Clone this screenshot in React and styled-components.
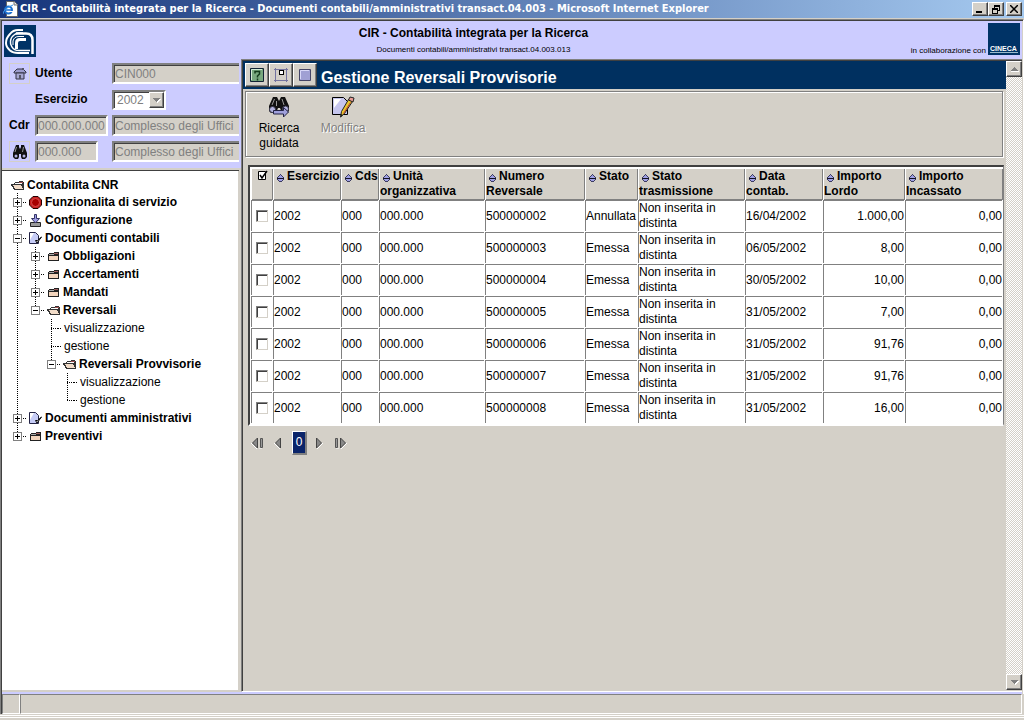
import React from 'react';
import styled, { createGlobalStyle, css } from 'styled-components';

const face = '#d4d0c8';
const shade = '#808080';
const dark = '#404040';
const lilac = '#ccccff';
const navy = '#003060';

const Global = createGlobalStyle`
  * { box-sizing: border-box; }
  body { margin: 0; background: ${face}; font: 12px/15px "Liberation Sans", Arial, sans-serif; color: #000; }
  button, input, select { font: inherit; color: inherit; margin: 0; padding: 0; border-radius: 0; }
  svg { display: block; flex: none; }
`;

const raised = css`
  background: ${face};
  border: 1px solid;
  border-color: #fff ${dark} ${dark} #fff;
  box-shadow: inset -1px -1px 0 ${shade};
`;
const sunken = css`
  border: 2px solid;
  border-color: ${shade} #fff #fff ${shade};
  box-shadow: inset 1px 1px 0 ${dark};
`;

const Window = styled.div`
  min-height: 100vh;
  display: flex;
  flex-direction: column;
  background: ${face};
`;
const TitleBar = styled.header`
  height: 18px;
  display: flex;
  align-items: center;
  padding: 0 2px 0 3px;
  background: linear-gradient(90deg, #16347a, #a6caf0);
  color: #fff;
`;
const WindowTitle = styled.span`
  flex: 1;
  margin-left: 2px;
  font: bold 11px/16px "DejaVu Sans Condensed", "Noto Sans", sans-serif;
  white-space: nowrap;
  overflow: hidden;
`;
const WindowButton = styled.button`
  ${raised}
  width: 16px;
  height: 14px;
  display: grid;
  place-items: center;
  margin-left: ${(p) => (p.$apart ? '2px' : '0')};
`;
const Client = styled.div`
  flex: 1;
  display: flex;
  flex-direction: column;
  margin-top: 1px;
  background: ${lilac};
  border-style: solid;
  border-width: 1px 1px 0 1px;
  border-color: ${shade} #fff #fff ${shade};
  box-shadow: inset 1px 1px 0 ${dark}, inset -1px 0 0 ${face};
  padding: 1px 1px 2px 1px;
`;
const Banner = styled.div`
  height: 38px;
  display: flex;
  justify-content: space-between;
  padding: 2px 2px 0;
`;
const BannerLogo = styled.div`
  margin-top: ${(p) => (p.$low ? '2px' : '0')};
  width: 32px;
  height: 32px;
  background: #003366;
`;
const BannerText = styled.div`
  text-align: center;
`;
const BannerTitle = styled.h1`
  margin: 2px 0 0;
  font-size: 12px;
  line-height: 16px;
`;
const Small = styled.div`
  font-size: 8px;
  line-height: 17px;
`;
const Partner = styled.div`
  display: flex;
  gap: 2px;
  align-items: flex-end;
  height: 32px;
  & > ${Small} { line-height: 8px; }
`;

const Columns = styled.div`
  flex: 1;
  display: flex;
`;
const Sidebar = styled.aside`
  width: 239px;
  flex: none;
  display: flex;
  flex-direction: column;
`;
const Form = styled.form`
  display: grid;
  gap: 5px;
  padding: 4px 0 6px 7px;
  width: 237px;
  overflow: hidden;
`;
const FormRow = styled.div`
  display: grid;
  grid-template-columns: 26px 77px 1fr;
  height: 21px;
  align-items: center;
`;
const Label = styled.label`
  font-weight: bold;
  grid-column: ${(p) => (p.$second ? 2 : 'auto')};
`;
const Field = styled.input`
  ${sunken}
  width: ${(p) => p.$width};
  height: 21px;
  padding-left: 1px;
  background: ${face};
  color: ${shade};
`;
const SelectBox = styled.div`
  ${sunken}
  width: 54px;
  height: 20px;
  display: flex;
  background: #fff;
`;
const Year = styled.select`
  appearance: none;
  flex: 1;
  min-width: 0;
  border: 0;
  background: transparent;
  padding: 1px 0 0 3px;
  color: ${shade};
  opacity: 1;
`;
const SelectArrow = styled.span`
  ${raised}
  width: 15px;
  display: grid;
  place-items: center;
`;
const IconButton = styled.button`
  width: 21px;
  height: 21px;
  display: grid;
  place-items: center;
  background: transparent;
  border: 1px solid ${face};
`;
const TreeFrame = styled.nav`
  flex: 1;
  background: #fff;
  border-top: 2px solid ${face};
  box-shadow: inset 0 1px 0 ${dark}, inset -1px 0 0 ${face};
  border-right: 2px solid ${face};
  border-bottom: 2px solid ${face};
  padding: 8px 0 6px 6px;
`;

const TreeRow = styled.div`
  height: ${(p) => (p.$root ? '15px' : '18px')};
  display: flex;
  align-items: center;
  white-space: nowrap;
`;
const vertical = 'repeating-linear-gradient(#000 0 1px, transparent 1px 2px) 9px 0 /';
const horizontal = 'repeating-linear-gradient(90deg, #000 0 1px, transparent 1px 2px) 9px 9px / 9px 1px no-repeat';
const Guide = styled.span`
  width: ${(p) => (p.$narrow ? '16px' : '18px')};
  height: 18px;
  flex: none;
  display: grid;
  align-items: center;
  padding-left: 5px;
  background: ${(p) =>
    ({
      line: `${vertical} 1px 18px no-repeat`,
      tee: `${horizontal}, ${vertical} 1px 18px no-repeat`,
      end: `${horizontal}, ${vertical} 1px 9px no-repeat`,
      none: 'none',
    })[p.$kind]};
`;
const Toggle = styled.button`
  width: 9px;
  height: 9px;
  border: 1px solid ${shade};
  background: #fff;
  display: grid;
  place-items: center;
`;
const TreeIcon = styled.span`
  width: 19px;
  flex: none;
  display: grid;
  justify-content: center;
`;
const Dots = styled.span`
  width: 4px;
  height: 1px;
  background: repeating-linear-gradient(90deg, #000 0 1px, transparent 1px 2px);
`;
const TreeLink = styled.a`
  color: #000;
  text-decoration: none;
  font-weight: ${(p) => (p.$leaf ? 'normal' : 'bold')};
  padding-left: ${(p) => (p.$leaf ? '2px' : '0')};
`;

const Main = styled.main`
  flex: 1;
  min-width: 0;
  display: flex;
  background: ${face};
  border-style: solid;
  border-width: 1px 0 1px 1px;
  border-color: ${shade} #fff #fff ${shade};
  box-shadow: inset 1px 1px 0 ${dark};
  padding: 1px 0 1px 1px;
`;
const Content = styled.div`
  flex: 1;
  min-width: 0;
`;
const SectionBar = styled.div`
  height: 28px;
  display: flex;
  align-items: center;
  padding-left: 2px;
  background: ${navy};
  color: #fff;
`;
const BarButton = styled.button`
  ${raised}
  width: 24px;
  height: 24px;
  display: grid;
  place-items: center;
`;
const SectionTitle = styled.h2`
  margin: 6px 0 0 4px;
  font-size: 16px;
  line-height: 20px;
`;
const Toolbar = styled.div`
  margin: 2px 3px 0 2px;
  height: 66px;
  border: 1px solid ${shade};
  box-shadow: inset 0 1px 0 #fff, inset 1px 0 0 #fff, 1px 1px 0 #fff;
  display: flex;
  align-items: flex-start;
  gap: 10px;
  padding: 4px 0 0 6px;
`;
const Tool = styled.button`
  width: 54px;
  border: 0;
  background: transparent;
  display: flex;
  flex-direction: column;
  align-items: center;
  gap: 3px;
  line-height: 15px;
  white-space: pre-line;
  color: ${(p) => (p.disabled ? shade : '#000')};
  text-shadow: ${(p) => (p.disabled ? '1px 1px 0 #fff' : 'none')};
`;

const TableFrame = styled.div`
  margin: 8px 2px 0 5px;
  background: #fff;
  border: 2px solid;
  border-color: ${dark} ${shade} #fff ${dark};
  border-right-width: 1px;
`;
const Table = styled.table`
  width: 100%;
  table-layout: fixed;
  border-spacing: 1px;
`;
const Th = styled.th`
  padding: 0;
  height: 31px;
  text-align: ${(p) => (p.$center ? 'center' : 'left')};
  vertical-align: top;
  white-space: pre;
  background: ${face};
  border-style: solid;
  border-color: #fff;
  border-width: 1px 0 0 1px;
  box-shadow: 1px 1px 0 ${shade};
`;
const SortButton = styled.button`
  border: 0;
  background: transparent;
  display: inline-block;
  vertical-align: -3px;
  height: 10px;
  margin: 0 2px;
`;
const Td = styled.td`
  padding: 0;
  height: 31px;
  border-style: solid;
  border-color: ${shade};
  border-width: 1px 0 0 1px;
  text-align: ${(p) => p.$align || 'left'};
`;
const Check = styled.input`
  appearance: none;
  display: block;
  margin: 0 auto;
  width: 12px;
  height: 12px;
  background: #fff;
  border: 1px solid;
  border-color: ${shade} ${face} ${face} ${shade};
  box-shadow: inset 1px 1px 0 ${dark};
`;
const HeadCheck = styled.button`
  width: 11px;
  height: 11px;
  border: 0;
  background: transparent;
  display: block;
  margin: 1px auto;
`;
const Pager = styled.div`
  display: flex;
  align-items: center;
  gap: 9px;
  margin-top: 5px;
  padding-left: 8px;
`;
const PageStep = styled.button`
  width: ${(p) => (p.$wide ? '14px' : '9px')};
  height: 12px;
  border: 0;
  background: transparent;
`;
const PageNumber = styled.button`
  ${raised}
  width: 15px;
  height: 24px;
  background: #0a246a;
  border-width: 1px 2px 2px 1px;
  border-color: #fff ${shade} ${shade} #fff;
  box-shadow: none;
  color: #fff;
`;

const ScrollBar = styled.div`
  width: 16px;
  flex: none;
  display: flex;
  flex-direction: column;
  background: repeating-conic-gradient(#fff 0 25%, ${face} 0 50%) 0 0 / 2px 2px;
`;
const ScrollButton = styled.button`
  ${raised}
  width: 16px;
  height: 16px;
  display: grid;
  place-items: center;
`;
const ScrollTrack = styled.div`
  flex: 1;
`;

const StatusBar = styled.footer`
  height: 20px;
  display: flex;
  background: ${face};
  border-left: 1px solid ${shade};
  box-shadow: inset 1px 0 0 ${dark};
  padding: 0 2px 0 1px;
`;
const StatusPane = styled.div`
  width: ${(p) => (p.$grow ? 'auto' : '18px')};
  flex: ${(p) => (p.$grow ? 1 : 'none')};
  height: 20px;
  border: 1px solid;
  border-color: ${shade} #fff #fff ${shade};
`;
const WindowEdge = styled.div`
  height: 3px;
  margin: 1px 0 2px;
  border: solid #fff;
  border-width: 1px 0;
`;

const BrowserIcon = () => (
  <svg width="15" height="16" viewBox="0 0 15 16">
    <path d="M3.500.5h8l3 3v12h-11z" fill="#fff" stroke="#666" />
    <path d="M11 1v3h3" fill="#ddd" stroke="#777" />
    <circle cx="5.500" cy="9" r="3.500" fill="#fff" stroke="#1c6fd0" strokeWidth="2" />
    <path d="M3 9h6" stroke="#1c6fd0" strokeWidth="1.500" />
    <path d="M7 10h3v1H7z" fill="#fff" />
    <path d="M0 13Q0 8 10 4" fill="none" stroke="#3c96e8" />
  </svg>
);
const CnrLogo = () => (
  <svg width="32" height="32" viewBox="0 0 32 32" fill="none" stroke="#fff">
    <path d="M19 5H14Q9 5 6 9Q2 13 2 18Q2 22 6 25.500Q9 28 14 28H25" strokeWidth="2" />
    <path d="M26 25.500H15Q10 25.500 8 22Q6 19 6.500 16Q7 12 10 10Q12 8 15 8H19" strokeWidth="1.500" />
    <path d="M12 8.500H22Q28.500 8.500 28.500 15V29" strokeWidth="2.500" />
    <path d="M22 14.500H16Q12.500 14.500 12.500 18V24" strokeWidth="3" />
    <path d="M9 20V16Q10 11.500 15 11.500H20" strokeWidth="1" />
  </svg>
);
const CinecaLogo = () => (
  <svg width="32" height="32" viewBox="0 0 32 32">
    <text x="2" y="28" fill="#fff" fontSize="7" fontWeight="bold" fontFamily="Liberation Sans, sans-serif">CINECA</text>
    <path d="M2 29.500h28" stroke="#9bc" />
  </svg>
);
const HomeIcon = () => (
  <svg width="14" height="13" viewBox="0 0 14 13">
    <path d="M1 5L4 2H10L13 5V6H1z" fill="#9c9cce" stroke="#334" />
    <path d="M3 6h8v6H3z" fill="#a6a6d2" stroke="#334" />
    <path d="M6 8h2v4H6zM9 1h2v2H9z" fill="#556" />
  </svg>
);
const SearchIcon = () => (
  <svg width="14" height="14" viewBox="0 0 14 14">
    <path d="M3 0h3v2l1 2 1-2V0h3l3 8v4l-2 2H9l-1-2V9H6v3l-1 2H2l-2-2V8z" fill="#111" />
    <path d="M3.500 2L2 7M10.500 2l-1 5" stroke="#999" />
    <circle cx="3" cy="11" r="1.500" fill="#b4b4e0" />
    <circle cx="11" cy="11" r="1.500" fill="#b4b4e0" />
  </svg>
);
const GuidedSearchIcon = () => (
  <svg width="22" height="22" viewBox="0 0 22 22">
    <path d="M5 1h4l2 4 2-4h4l4 9v5l-2 2h-5l-2-5h-2l-2 5H3l-2-2v-5z" fill="#111" />
    <path d="M6.500 3L4 9M14 3l2 6M8.500 5v5" stroke="#999" />
    <ellipse cx="4.500" cy="13.500" rx="3" ry="3" fill="#b4b4e0" stroke="#334" />
    <ellipse cx="17.500" cy="13" rx="3" ry="3" fill="#b4b4e0" stroke="#334" />
    <path d="M5.500 14.500h10v-3l5 4.500-5 5v-3h-10z" fill="#a0a0dc" stroke="#224" />
  </svg>
);
const EditIcon = () => (
  <svg width="24" height="22" viewBox="0 0 24 22">
    <path d="M1.500 1.500h11l4 4v13h-15z" fill="#c6c6ee" stroke="#000" />
    <path d="M3 3h7L3 12z" fill="#fff" />
    <path d="M17.500 3.500l4 2-8 12-4 3.500 1-5.500z" fill="#e9c62d" stroke="#222" />
    <path d="M19.500 6.500l-7 11" stroke="#c04030" />
    <path d="M10 18l2 1-2.500 2.500z" fill="#222" />
    <path d="M17.500 4l1.500-3 4 1-1 4z" fill="#e89a94" stroke="#222" />
  </svg>
);
const HelpIcon = () => (
  <svg width="14" height="14" viewBox="0 0 14 14">
    <path d="M.5.5h13v13H.5z" fill="#78a87e" stroke="#123" />
    <path d="M1.500 12V1.500H12" fill="none" stroke="#d4ecd6" />
    <path d="M5 5.500V3.500h4.500V6L7.500 8v1.500M7.500 10.500v2" fill="none" stroke="#143c1c" strokeWidth="1.500" />
  </svg>
);
const DockIcon = () => (
  <svg width="14" height="14" viewBox="0 0 14 14" fill="none" shapeRendering="crispEdges">
    <path d="M1.500 0v14M12.500 0v14M0 1.500h14M0 12.500h14" stroke="#7474a0" />
    <path d="M5 2.500h4v4H5z" fill="#fff" stroke="#000" />
  </svg>
);
const PanelIcon = () => (
  <svg width="12" height="12" viewBox="0 0 12 12">
    <path d="M.5.5h11v11H.5z" fill="#a0a0d4" stroke="#446" />
    <path d="M1.500 10V1.500H10" fill="none" stroke="#d8d8f8" />
  </svg>
);
const Folder = ({ open }) =>
  open ? (
    <svg width="13" height="9" viewBox="0 0 13 9" shapeRendering="crispEdges">
      <path d="M4 1h4V0h4v1h1v8H3V8H2V6H1V5H0V3h3V2h1z" fill="#333" />
      <path d="M8 1h4v1H8z" fill="#a05050" />
      <path d="M4 2h7v1H4z" fill="#fff" />
      <path d="M1 4h9v1H2zM3 5h8v1H3zM3 6h8v1H3zM4 7h8v1H4z" fill="#f2dcc8" />
    </svg>
  ) : (
    <svg width="11" height="9" viewBox="0 0 11 9" shapeRendering="crispEdges">
      <path d="M1 1h5V0h5v9H0V2h1z" fill="#222" />
      <path d="M6 1h4v1H6z" fill="#a06060" />
      <path d="M1 2h5v1H1z" fill="#aaa" />
      <path d="M1 4h9v4H1z" fill="#f2d4bc" />
    </svg>
  );
const StopIcon = () => (
  <svg width="13" height="13" viewBox="0 0 13 13">
    <path d="M4 .5h5L12.500 4v5L9 12.500H4L.5 9V4z" fill="#c82020" stroke="#200" />
    <circle cx="6.500" cy="6.500" r="4" fill="#a80000" stroke="#d85050" />
  </svg>
);
const ConfigIcon = () => (
  <svg width="11" height="13" viewBox="0 0 11 13">
    <path d="M.5 8.500h10v4H.5z" fill="#999" stroke="#222" />
    <path d="M4.500.5h2v4h3l-4 4.500-4-4.500h3z" fill="#9c9ce4" stroke="#336" />
  </svg>
);
const DocIcon = () => (
  <svg width="13" height="12" viewBox="0 0 13 12">
    <path d="M.5.5h6l3 3v8h-9z" fill="#c6ccf6" stroke="#224" />
    <path d="M1 1h4L1 8z" fill="#fff" />
    <path d="M6.500 8.500h2l4-3.500-4.500 6z" fill="#fff" stroke="#000" />
  </svg>
);
const treeIcons = {
  open: <Folder open />,
  closed: <Folder />,
  stop: <StopIcon />,
  config: <ConfigIcon />,
  doc: <DocIcon />,
};
const SortIcon = () => (
  <svg width="9" height="10" viewBox="0 0 9 10" shapeRendering="crispEdges">
    <path d="M4 1h1v1h1v1h1v1h1v3H7v1H6v1H3V8H2V7H1V4h1V3h1V2h1z" fill="#3c3c60" />
    <path d="M4 2h1v1h1v1h1v1H2V4h1V3h1zM2 6h5v1H6v1H3V7H2z" fill="#a0a0e4" />
    <path d="M1 5h7v1H1z" fill="#112" />
  </svg>
);
const CheckIcon = () => (
  <svg width="11" height="11" viewBox="0 0 11 11">
    <path d="M1.500 1.500h7v8h-7z" fill="#fff" stroke="#000" />
    <path d="M3 5l2 3 5-7" fill="none" stroke="#000" strokeWidth="1.500" />
  </svg>
);
const Caret = ({ up }) => (
  <svg width="9" height="6" viewBox="0 0 9 6" shapeRendering="crispEdges">
    <path d={up ? 'M1 5h8v1H1z' : 'M2 2h7L5 6z'} fill="#fff" />
    <path d={up ? 'M4 1L0 5h8z' : 'M0 1h8L4 5z'} fill={shade} />
  </svg>
);
const StepIcon = ({ back, end }) => (
  <svg width={end ? 14 : 8} height="12" viewBox={end ? '0 0 14 12' : '0 0 8 12'}>
    <g transform={back ? `translate(${end ? 13 : 7} 0) scale(-1 1)` : undefined}>
      {end && <path d="M1.500 1.500h2v9h-2z" fill="#999" stroke="#555" />}
      <path d={end ? 'M7 12l6-6M2 12h3' : 'M1 12l6-6'} stroke="#fff" />
      <path d={end ? 'M6.500 1l5 5-5 5z' : 'M.5 1l5 5-5 5z'} fill="#888" stroke="#444" />
    </g>
  </svg>
);

const tree = [
  { t: 'Funzionalita di servizio', g: ['tee'], s: '+', i: 'stop' },
  { t: 'Configurazione', g: ['tee'], s: '+', i: 'config' },
  { t: 'Documenti contabili', g: ['tee'], s: '-', i: 'doc' },
  { t: 'Obbligazioni', g: ['line', 'tee'], s: '+', i: 'closed' },
  { t: 'Accertamenti', g: ['line', 'tee'], s: '+', i: 'closed' },
  { t: 'Mandati', g: ['line', 'tee'], s: '+', i: 'closed' },
  { t: 'Reversali', g: ['line', 'end'], s: '-', i: 'open' },
  { t: 'visualizzazione', g: ['line', 'none', 'tee'] },
  { t: 'gestione', g: ['line', 'none', 'tee'] },
  { t: 'Reversali Provvisorie', g: ['line', 'none', 'end'], s: '-', i: 'open' },
  { t: 'visualizzazione', g: ['line', 'none', 'none', 'tee'] },
  { t: 'gestione', g: ['line', 'none', 'none', 'end'] },
  { t: 'Documenti amministrativi', g: ['tee'], s: '+', i: 'doc' },
  { t: 'Preventivi', g: ['end'], s: '+', i: 'closed' },
];

const TreeItem = ({ item }) => (
  <TreeRow>
    {item.g.map((kind, n) => {
      const last = n === item.g.length - 1;
      return (
        <Guide key={n} $kind={kind} $narrow={n > 0 && (!last || !item.i)}>
          {last && item.s && (
            <Toggle aria-label={item.s === '+' ? 'Espandi' : 'Comprimi'}>
              <svg width="5" height="5" viewBox="0 0 5 5" shapeRendering="crispEdges">
                <path d={item.s === '+' ? 'M0 2h5v1H0zM2 0h1v5H2z' : 'M0 2h5v1H0z'} />
              </svg>
            </Toggle>
          )}
        </Guide>
      );
    })}
    {item.i ? <TreeIcon>{treeIcons[item.i]}</TreeIcon> : <Dots />}
    <TreeLink href="#" $leaf={!item.i}>{item.t}</TreeLink>
  </TreeRow>
);

const columns = [
  ['Esercizio', 67],
  ['Cds', 37],
  ['Unità\norganizzativa', 105],
  ['Numero\nReversale', 99],
  ['Stato', 52],
  ['Stato\ntrasmissione', 106],
  ['Data\ncontab.', 77],
  ['Importo\nLordo', 81],
  ['Importo\nIncassato'],
];
const rows = [
  ['500000002', 'Annullata', '16/04/2002', '1.000,00'],
  ['500000003', 'Emessa', '06/05/2002', '8,00'],
  ['500000004', 'Emessa', '30/05/2002', '10,00'],
  ['500000005', 'Emessa', '31/05/2002', '7,00'],
  ['500000006', 'Emessa', '31/05/2002', '91,76'],
  ['500000007', 'Emessa', '31/05/2002', '91,76'],
  ['500000008', 'Emessa', '31/05/2002', '16,00'],
];

export default function App() {
  return (
    <Window>
      <Global />
      <TitleBar>
        <BrowserIcon />
        <WindowTitle>
          CIR - Contabilità integrata per la Ricerca - Documenti contabili/amministrativi transact.04.003 - Microsoft Internet Explorer
        </WindowTitle>
        <WindowButton aria-label="Riduci a icona">
          <svg width="8" height="8"><path d="M0 6h6v2H0z" /></svg>
        </WindowButton>
        <WindowButton aria-label="Ripristina">
          <svg width="9" height="9" shapeRendering="crispEdges">
            <path d="M2 0h6v6H6V5h1V2H3v1H2zM0 3h6v6H0zM1 5v3h4V5z" fillRule="evenodd" />
          </svg>
        </WindowButton>
        <WindowButton $apart aria-label="Chiudi">
          <svg width="8" height="8"><path d="M0 0l8 8M8 0L0 8" stroke="#000" strokeWidth="1.500" /></svg>
        </WindowButton>
      </TitleBar>
      <Client>
        <Banner>
          <BannerLogo $low><CnrLogo /></BannerLogo>
          <BannerText>
            <BannerTitle>CIR - Contabilità integrata per la Ricerca</BannerTitle>
            <Small>Documenti contabili/amministrativi transact.04.003.013</Small>
          </BannerText>
          <Partner>
            <Small>in collaborazione con</Small>
            <BannerLogo><CinecaLogo /></BannerLogo>
          </Partner>
        </Banner>
        <Columns>
          <Sidebar>
            <Form>
              <FormRow>
                <IconButton type="button" aria-label="Home"><HomeIcon /></IconButton>
                <Label htmlFor="utente">Utente</Label>
                <Field id="utente" $width="140px" defaultValue="CIN000" disabled />
              </FormRow>
              <FormRow>
                <Label $second htmlFor="esercizio">Esercizio</Label>
                <SelectBox>
                  <Year id="esercizio" disabled><option>2002</option></Year>
                  <SelectArrow><Caret /></SelectArrow>
                </SelectBox>
              </FormRow>
              <FormRow>
                <Label htmlFor="cdr">Cdr</Label>
                <Field id="cdr" $width="73px" defaultValue="000.000.000" disabled />
                <Field aria-label="Descrizione Cdr" $width="140px" defaultValue="Complesso degli Uffici" disabled />
              </FormRow>
              <FormRow>
                <IconButton type="button" aria-label="Cerca"><SearchIcon /></IconButton>
                <Field aria-label="Unità" $width="63px" defaultValue="000.000" disabled />
                <Field aria-label="Descrizione unità" $width="140px" defaultValue="Complesso degli Uffici" disabled />
              </FormRow>
            </Form>
            <TreeFrame>
              <TreeRow $root>
                <TreeIcon><Folder open /></TreeIcon>
                <TreeLink href="#">Contabilita CNR</TreeLink>
              </TreeRow>
              {tree.map((item, n) => <TreeItem key={n} item={item} />)}
            </TreeFrame>
          </Sidebar>
          <Main>
            <Content>
              <SectionBar>
                <BarButton aria-label="Aiuto"><HelpIcon /></BarButton>
                <BarButton aria-label="Aggancia"><DockIcon /></BarButton>
                <BarButton aria-label="Pannello"><PanelIcon /></BarButton>
                <SectionTitle>Gestione Reversali Provvisorie</SectionTitle>
              </SectionBar>
              <Toolbar>
                <Tool><GuidedSearchIcon />{'Ricerca\nguidata'}</Tool>
                <Tool disabled><EditIcon />Modifica</Tool>
              </Toolbar>
              <TableFrame>
                <Table>
                  <colgroup>
                    <col width="21" />
                    {columns.map(([name, width], n) => <col key={n} width={width} />)}
                  </colgroup>
                  <thead>
                    <tr>
                      <Th $center><HeadCheck aria-label="Seleziona tutto"><CheckIcon /></HeadCheck></Th>
                      {columns.map(([name], n) => (
                        <Th key={n}>
                          <SortButton aria-label="Ordina"><SortIcon /></SortButton>
                          {name}
                        </Th>
                      ))}
                    </tr>
                  </thead>
                  <tbody>
                    {rows.map(([number, state, date, gross]) => (
                      <tr key={number}>
                        <Td><Check type="checkbox" aria-label={`Seleziona ${number}`} /></Td>
                        <Td>2002</Td>
                        <Td>000</Td>
                        <Td>000.000</Td>
                        <Td>{number}</Td>
                        <Td>{state}</Td>
                        <Td>Non inserita in distinta</Td>
                        <Td>{date}</Td>
                        <Td $align="right">{gross}</Td>
                        <Td $align="right">0,00</Td>
                      </tr>
                    ))}
                  </tbody>
                </Table>
              </TableFrame>
              <Pager>
                <PageStep $wide aria-label="Prima pagina"><StepIcon back end /></PageStep>
                <PageStep aria-label="Pagina precedente"><StepIcon back /></PageStep>
                <PageNumber>0</PageNumber>
                <PageStep aria-label="Pagina successiva"><StepIcon /></PageStep>
                <PageStep $wide aria-label="Ultima pagina"><StepIcon end /></PageStep>
              </Pager>
            </Content>
            <ScrollBar>
              <ScrollButton aria-label="Scorri su"><Caret up /></ScrollButton>
              <ScrollTrack />
              <ScrollButton aria-label="Scorri giù"><Caret /></ScrollButton>
            </ScrollBar>
          </Main>
        </Columns>
      </Client>
      <StatusBar>
        <StatusPane />
        <StatusPane $grow />
      </StatusBar>
      <WindowEdge />
    </Window>
  );
}
